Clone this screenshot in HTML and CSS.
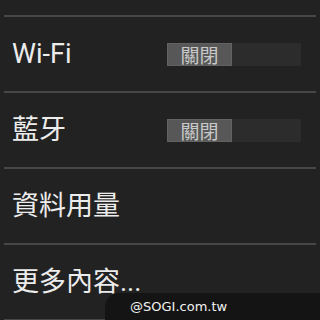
FILE: index.html
```html
<!DOCTYPE html>
<html lang="zh-Hant">
<head>
    <meta charset="UTF-8">
    <meta name="viewport" content="width=device-width, initial-scale=1.0">
    <title>無線與網路</title>
    <link rel="stylesheet" href="styles.css">
</head>
<body>

<div class="list">
    <div class="row top"></div>
    <div class="row">
        <span class="label">Wi-Fi</span>
        <div class="toggle"><span class="thumb">關閉</span></div>
    </div>
    <div class="row">
        <span class="label">藍牙</span>
        <div class="toggle"><span class="thumb">關閉</span></div>
    </div>
    <div class="row">
        <span class="label">資料用量</span>
    </div>
    <div class="row">
        <span class="label">更多內容...</span>
    </div>
</div>

<div class="watermark">@SOGI.com.tw</div>

</body>
</html>
```

FILE: styles.css
```css
body {
    margin: 0;
    background-color: #222222;
    font-family: Roboto, "Noto Sans CJK TC", sans-serif;
    color: #ececec;
    height: 320px;
    overflow: hidden;
    position: relative;
}
.list {
    display: flex;
    flex-direction: column;
}
.row {
    display: flex;
    align-items: center;
    height: 74px;
    margin: 0 4px;
    padding-left: 8px;
    border-bottom: 2px solid #474747;
}
.row.top {
    height: 15px;
}
.label {
    width: 155px;
    font-size: 27px;
    line-height: 1;
}
.toggle {
    width: 134px;
    height: 23px;
    background-color: #2c2c2c;
    display: flex;
    align-items: center;
}
.thumb {
    width: 65px;
    height: 23px;
    background-color: #575757;
    border: 1px solid #626262;
    box-sizing: border-box;
    color: #c8c8c8;
    font-family: "Noto Sans CJK TC", sans-serif;
    font-size: 19px;
    line-height: 21px;
    text-align: center;
}
.watermark {
    position: absolute;
    left: 105px;
    top: 293px;
    width: 190px;
    height: 27px;
    padding-left: 25px;
    background-color: #141414;
    border-top-left-radius: 14px;
    font-family: "DejaVu Sans", sans-serif;
    font-size: 13px;
    line-height: 27px;
    color: #f2f2f2;
}
```
